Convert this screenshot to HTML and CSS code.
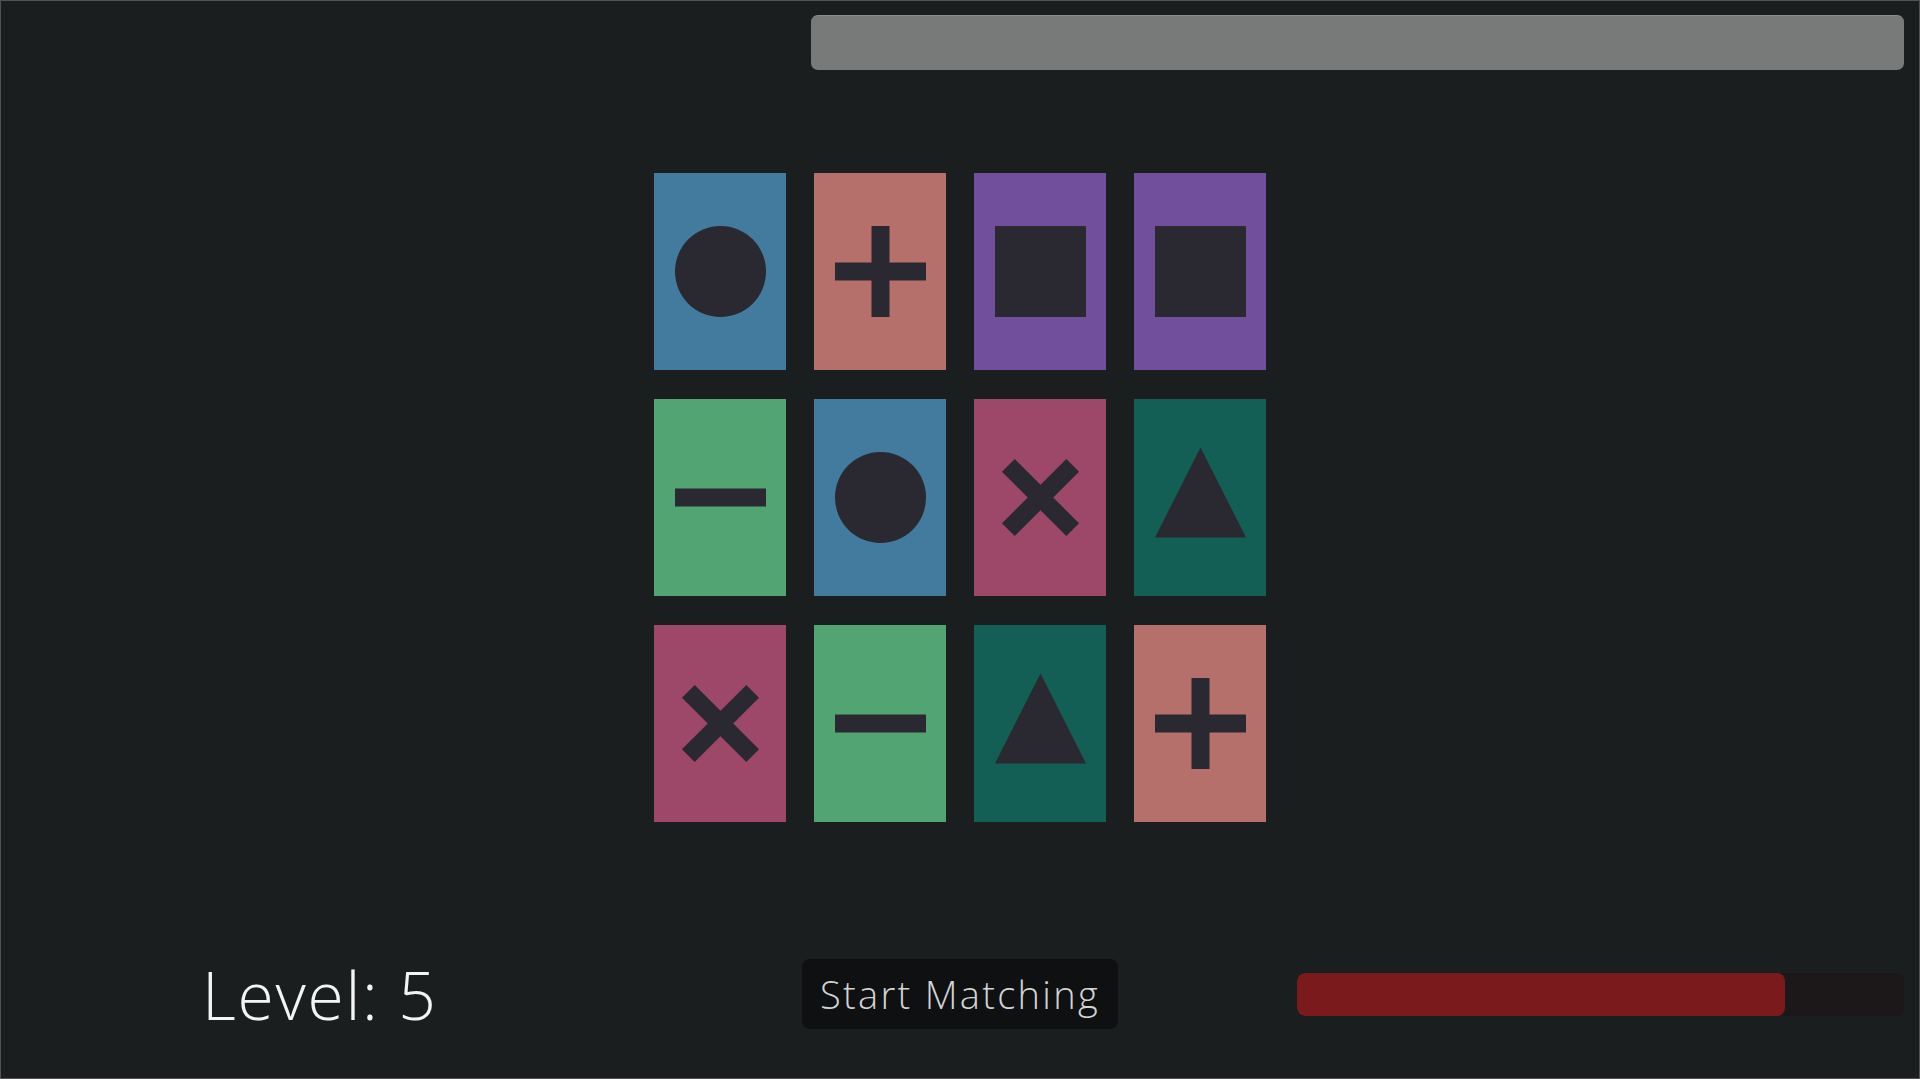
FILE: index.html
```html
<!DOCTYPE html>
<html lang="en">
<head>
<meta charset="utf-8">
<title>Matching Game</title>
<link rel="stylesheet" href="styles.css">
</head>
<body>
<div class="screen">
  <header class="top">
    <div class="top-bar"></div>
  </header>

  <main class="board">
    <div class="card blue"><svg viewBox="0 0 91 91" class="sym"><ellipse cx="45.5" cy="45.5" rx="45.5" ry="45.5"/></svg></div>
    <div class="card salmon"><svg viewBox="0 0 91 91" class="sym"><rect x="36.5" y="0" width="18" height="91"/><rect x="0" y="36.5" width="91" height="18"/></svg></div>
    <div class="card purple"><svg viewBox="0 0 91 91" class="sym"><rect x="0" y="0" width="91" height="91"/></svg></div>
    <div class="card purple"><svg viewBox="0 0 91 91" class="sym"><rect x="0" y="0" width="91" height="91"/></svg></div>

    <div class="card green"><svg viewBox="0 0 91 91" class="sym"><rect x="0" y="36.5" width="91" height="18"/></svg></div>
    <div class="card blue"><svg viewBox="0 0 91 91" class="sym"><ellipse cx="45.5" cy="45.5" rx="45.5" ry="45.5"/></svg></div>
    <div class="card pink"><svg viewBox="0 0 91 91" class="sym"><g transform="rotate(45 45.5 45.5)"><rect x="36.5" y="0" width="18" height="91"/><rect x="0" y="36.5" width="91" height="18"/></g></svg></div>
    <div class="card teal"><svg viewBox="0 0 91 91" class="sym"><polygon points="45.5,-4.5 91,85.5 0,85.5"/></svg></div>

    <div class="card pink"><svg viewBox="0 0 91 91" class="sym"><g transform="rotate(45 45.5 45.5)"><rect x="36.5" y="0" width="18" height="91"/><rect x="0" y="36.5" width="91" height="18"/></g></svg></div>
    <div class="card green"><svg viewBox="0 0 91 91" class="sym"><rect x="0" y="36.5" width="91" height="18"/></svg></div>
    <div class="card teal"><svg viewBox="0 0 91 91" class="sym"><polygon points="45.5,-4.5 91,85.5 0,85.5"/></svg></div>
    <div class="card salmon"><svg viewBox="0 0 91 91" class="sym"><rect x="36.5" y="0" width="18" height="91"/><rect x="0" y="36.5" width="91" height="18"/></svg></div>
  </main>

  <footer class="footer">
    <div class="level">Level: 5</div>
    <button class="start">Start Matching</button>
    <div class="health-wrap">
      <div class="health"><div class="health-fill" style="width: 80.4%"></div></div>
    </div>
  </footer>
</div>
</body>
</html>
```

FILE: styles.css
```css
* { box-sizing: border-box; }

html, body {
  margin: 0;
  padding: 0;
  background: #1b1e1f;
}

.screen {
  width: 1920px;
  height: 1079px;
  border: 1px solid #505354;
  background: #1b1e1f;
  display: flex;
  flex-direction: column;
  font-family: "Open Sans", "Lato", sans-serif;
  overflow: hidden;
}

.top {
  display: flex;
  justify-content: flex-end;
  padding: 14px 15px 0 0;
}

.top-bar {
  width: 1093px;
  height: 55px;
  background: #787a79;
  border-radius: 7px;
  border-top: 1px solid #8a8c8b;
}

.board {
  align-self: center;
  margin-top: 103px;
  display: grid;
  grid-template-columns: repeat(4, 132px);
  grid-auto-rows: 197px;
  column-gap: 28px;
  row-gap: 29px;
}

.card {
  display: flex;
  align-items: center;
  justify-content: center;
}

.sym {
  width: 91px;
  height: 91px;
  fill: #2a2830;
  display: block;
  overflow: visible;
}

.blue   { background: #437b9f; }
.salmon { background: #b6706c; }
.purple { background: #724f9d; }
.green  { background: #52a472; }
.pink   { background: #9d4868; }
.teal   { background: #135e55; }

.footer {
  margin-top: 137px;
  display: grid;
  grid-template-columns: 1fr auto 1fr;
  align-items: center;
  height: 70px;
}

.level {
  padding-left: 201px;
  font-size: 66px;
  font-weight: 300;
  color: #f4f4f4;
  line-height: 1;
  letter-spacing: 1.7px;
}

.start {
  width: 316px;
  height: 70px;
  background: #0e1011;
  border: none;
  border-radius: 8px;
  color: #d2d3d3;
  font-family: "Open Sans", "Lato", sans-serif;
  font-weight: 300;
  font-size: 38px;
  letter-spacing: 2.3px;
  padding: 0;
}

.health-wrap {
  display: flex;
  justify-content: flex-end;
  padding-right: 15px;
}

.health {
  width: 607px;
  height: 43px;
  background: #1c1819;
  border-radius: 8px;
  overflow: hidden;
}

.health-fill {
  height: 100%;
  background: #7a1a1c;
  border-radius: 8px;
}
```
